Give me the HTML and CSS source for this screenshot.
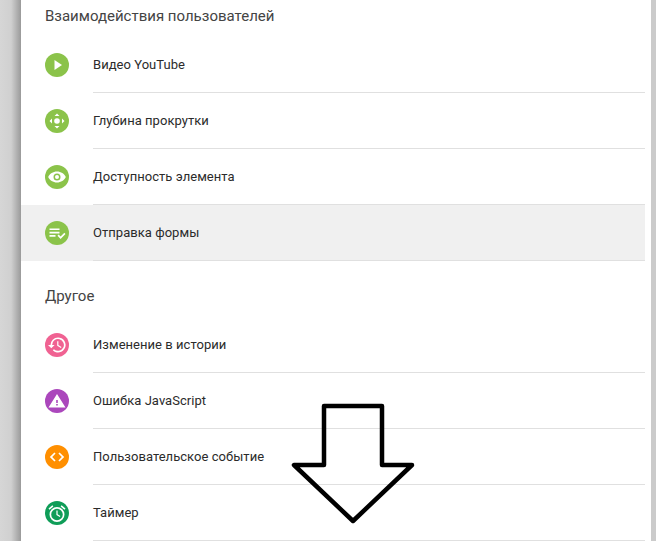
FILE: index.html
```html
<!DOCTYPE html>
<html lang="ru">
<head>
<meta charset="utf-8">
<title>Триггеры</title>
<link rel="stylesheet" href="styles.css">
</head>
<body>
<main class="panel">
  <section>
    <h2 class="heading heading-first">Взаимодействия пользователей</h2>
    <ul class="list">
      <li class="row"><span class="badge green"><svg viewBox="0 0 24 24"><path d="M9.500 7v10l7.500-5z"/></svg></span><span class="label">Видео YouTube</span></li>
      <li class="row"><span class="badge green"><svg viewBox="0 0 24 24"><circle cx="12" cy="12" r="2.800"/><path d="M12 4.500l2.500 2.500h-5zM12 19.500l-2.500-2.500h5zM4.500 12l2.500-2.500v5zM19.500 12l-2.500 2.500v-5z"/></svg></span><span class="label">Глубина прокрутки</span></li>
      <li class="row"><span class="badge green"><svg viewBox="0 0 24 24"><path fill-rule="evenodd" d="M12 6.500c-4 0-7.300 2.300-8.800 5.500 1.500 3.200 4.800 5.500 8.800 5.500s7.300-2.300 8.800-5.500c-1.500-3.200-4.800-5.500-8.800-5.500zm0 2a3.500 3.500 0 1 1 0 7 3.500 3.500 0 0 1 0-7zm0 1.500a2 2 0 1 0 0 4 2 2 0 0 0 0-4z"/></svg></span><span class="label">Доступность элемента</span></li>
      <li class="row active"><span class="badge green"><svg viewBox="0 0 24 24"><path d="M4.500 7.500h10v1.600h-10zM4.500 10.800h10v1.600h-10zM4.500 14.100h6v1.600h-6z"/><path d="M12.500 14.800l1.200-1.200 1.900 1.900 3.700-3.700 1.200 1.200-4.900 4.900z"/></svg></span><span class="label">Отправка формы</span></li>
    </ul>
  </section>
  <section>
    <h2 class="heading heading-other">Другое</h2>
    <ul class="list">
      <li class="row"><span class="badge pink"><svg viewBox="0 0 24 24"><path d="M13 4.500a7.500 7.500 0 0 0-7.500 7.500H3l3.300 3.300L9.600 12H7.100a5.900 5.900 0 1 1 1.800 4.200l-1.100 1.100A7.500 7.500 0 1 0 13 4.500z"/><path d="M12.200 8.200v4.500l3.700 2.200.6-1-3.100-1.800V8.200z"/></svg></span><span class="label">Изменение в истории</span></li>
      <li class="row"><span class="badge purple"><svg viewBox="0 0 24 24"><path fill-rule="evenodd" d="M12 5L3.500 18.500h17zM11.200 11h1.600v3h-1.600zM11.200 15h1.600v1.600h-1.600z"/></svg></span><span class="label">Ошибка JavaScript</span></li>
      <li class="row"><span class="badge orange"><svg viewBox="0 0 24 24"><path d="M9.400 16.600L4.800 12l4.600-4.600 1.200 1.200L7.200 12l3.400 3.400zM14.600 16.600l4.600-4.600-4.600-4.600-1.200 1.200 3.400 3.400-3.400 3.400z"/></svg></span><span class="label">Пользовательское событие</span></li>
      <li class="row"><span class="badge teal"><svg viewBox="0 0 24 24"><path d="M20.500 7.500l-3.900-3.200-1 1.200 3.900 3.200zM8.400 5.500l-1-1.200-3.900 3.200 1 1.200z"/><path fill-rule="evenodd" d="M12 6a7.500 7.500 0 1 0 0 15 7.500 7.500 0 0 0 0-15zm0 1.700a5.800 5.800 0 1 1 0 11.600 5.800 5.800 0 0 1 0-11.600z"/><path d="M11.400 9.500v4.400l3.400 2 .6-1-2.800-1.700V9.500z"/></svg></span><span class="label">Таймер</span></li>
    </ul>
  </section>
</main>
<svg class="arrow" viewBox="0 0 656 541" aria-hidden="true"><path d="M324 406H382V465H412L353 521L294 465H324Z"/></svg>
</body>
</html>
```
FILE: styles.css
```css
* { box-sizing: border-box; }
html, body { margin: 0; height: 541px; overflow: hidden; }
body {
  position: relative;
  padding: 0 5px 0 21px;
  background: linear-gradient(90deg, #d6d6d6 0, #d0d0d0 11px, #9a9a9a 21px);
  font-family: Roboto, "Noto Sans", sans-serif;
}
body::after {
  content: "";
  position: absolute;
  top: 0; right: 0; bottom: 0;
  width: 5px;
  background: #cbcbcb;
}
.panel { height: 541px; background: #fff; padding-right: 6px; }
.heading {
  margin: 0;
  height: 56px;
  padding-left: 24px;
  display: flex;
  align-items: center;
  font-size: 15px;
  font-weight: 400;
  color: #444;
}
.heading-first { height: 37px; padding-bottom: 5px; }
.heading-other { padding-top: 13px; }
.list { list-style: none; margin: 0; padding: 0; }
.row {
  position: relative;
  height: 56px;
  display: flex;
  align-items: center;
  padding: 0 0 1px 24px;
}
.row::after {
  content: "";
  position: absolute;
  left: 72px; right: 0; bottom: 0;
  height: 1px;
  background: #e0e0e0;
}
.active { background: #f0f0f0; }
.badge {
  flex: none;
  width: 24px;
  height: 24px;
  border-radius: 50%;
  display: flex;
  margin-right: 24px;
}
.badge svg { width: 24px; height: 24px; fill: #fff; }
.green { background: #8bc34a; }
.pink { background: #f06292; }
.purple { background: #ab47bc; }
.orange { background: #ff8f00; }
.teal { background: #0f9d58; }
.label { font-size: 13px; font-weight: 400; letter-spacing: 0.04px; color: #2b2b2b; line-height: 16px; }
.arrow {
  position: absolute;
  left: 0; top: 0;
  width: 656px; height: 541px;
  fill: none;
  stroke: #000;
  stroke-width: 4.500;
  stroke-linejoin: round;
  pointer-events: none;
}
```
